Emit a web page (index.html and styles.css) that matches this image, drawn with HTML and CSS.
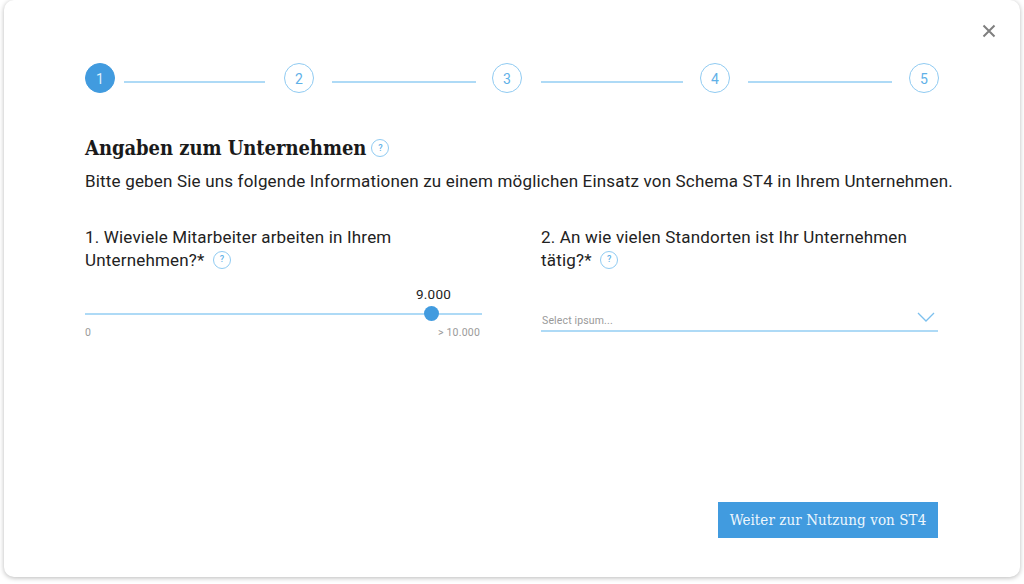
FILE: index.html
```html
<!DOCTYPE html>
<html lang="de">
<head>
<meta charset="utf-8">
<title>Angaben zum Unternehmen</title>
<link rel="stylesheet" href="styles.css">
</head>
<body>
<main class="card">
  <button class="close" aria-label="Schließen">
    <svg width="14" height="14" viewBox="0 0 14 14"><path d="M1.5 1.5 12.5 12.5M12.5 1.5 1.5 12.5" fill="none" stroke="#7f7f7f" stroke-width="2"/></svg>
  </button>
  <ol class="stepper">
    <li class="step step-active">1</li>
    <li class="line line-first"></li>
    <li class="step">2</li>
    <li class="line line-b"></li>
    <li class="step">3</li>
    <li class="line line-c"></li>
    <li class="step">4</li>
    <li class="line line-d"></li>
    <li class="step">5</li>
  </ol>
  <h1 class="title">Angaben zum Unternehmen <span class="help help-title">?</span></h1>
  <p class="intro">Bitte geben Sie uns folgende Informationen zu einem möglichen Einsatz von Schema ST4 in Ihrem Unternehmen.</p>
  <div class="columns">
    <section class="col col-left">
      <h2 class="question">1. Wieviele Mitarbeiter arbeiten in Ihrem Unternehmen?* <span class="help">?</span></h2>
      <div class="slider">
        <div class="slider-value">9.000</div>
        <div class="slider-track"><span class="slider-thumb"></span></div>
        <div class="slider-scale"><span>0</span><span>&gt; 10.000</span></div>
      </div>
    </section>
    <section class="col col-right">
      <h2 class="question">2. An wie vielen Standorten ist Ihr Unternehmen tätig?* <span class="help">?</span></h2>
      <div class="select">
        <span>Select ipsum...</span>
        <svg width="18" height="10" viewBox="0 0 18 10"><path d="M1 1 9 9 17 1" fill="none" stroke="#7cc0ee" stroke-width="1.3"/></svg>
      </div>
    </section>
  </div>
  <div class="actions">
    <button class="next">Weiter zur Nutzung von ST4</button>
  </div>
</main>
</body>
</html>
```
FILE: styles.css
```css
* { box-sizing: border-box; }
html, body { margin: 0; height: 100%; background: #fff; }
body { padding: 0 4px 7px; font-family: Roboto, "Liberation Sans", sans-serif; color: #222; overflow: hidden; }
.card {
  position: relative;
  height: 577px;
  padding: 63px 82px 0 81px;
  background: #fff;
  border-radius: 10px;
  box-shadow: 0 1px 5px rgba(0,0,0,.28);
  display: flex;
  flex-direction: column;
}
.close { position: absolute; top: 24px; right: 24px; width: 14px; height: 14px; padding: 0; border: 0; background: none; display: flex; }
.stepper { list-style: none; margin: 0; padding: 0; display: flex; align-items: center; width: 854px; }
.step {
  flex: none; width: 30px; height: 30px; border-radius: 50%;
  border: 1px solid #90cbf2; color: #5fb1e8; background: #fff;
  font-size: 14px; display: flex; align-items: center; justify-content: center; padding-top: 1px;
}
.step-active { background: #419bdf; border-color: #419bdf; color: #dff0fb; }
.line { flex: none; height: 2px; background: #aedaf6; margin-top: 7px; }
.line-first { width: 141px; margin-left: 9px; margin-right: 19px; }
.line-b { width: 144px; margin-left: 18px; margin-right: 16px; }
.line-c { width: 142px; margin-left: 19px; margin-right: 17px; }
.line-d { width: 144px; margin-left: 18px; margin-right: 17px; }
.title {
  margin: 41px 0 0; font: bold 20px/28px "DejaVu Serif Condensed", "DejaVu Serif", serif; letter-spacing: -.05px; color: #1a1a1a;
  display: flex; align-items: center; gap: 5px;
}
.help {
  display: inline-flex; width: 18px; height: 18px; border: 1px solid #90cbf2; border-radius: 50%;
  align-items: center; justify-content: center; vertical-align: 4px; margin-left: 4px;
  font: 500 9px/1 Roboto, sans-serif; color: #5fb1e8; letter-spacing: 0;
}
.help-title { margin-left: 0; }
.intro { margin: 7px 0 0; font-size: 17px; line-height: 24px; white-space: nowrap; letter-spacing: .18px; }
.columns { display: flex; margin-top: 33px; }
.col { flex: none; }
.col-left { width: 397px; margin-right: 59px; }
.col-right { width: 397px; }
.question { margin: 0; font-weight: 400; font-size: 17px; line-height: 23px; letter-spacing: .18px; }
.slider { margin-top: 14px; }
.slider-value { font-size: 13.5px; line-height: 16px; text-align: right; padding-right: 31px; letter-spacing: .2px; }
.slider-track { position: relative; height: 2px; margin-top: 11px; background: #aedaf6; }
.slider-thumb { position: absolute; left: 339px; top: -7px; width: 15px; height: 15px; border-radius: 50%; background: #419bdf; }
.slider-scale { display: flex; justify-content: space-between; padding-right: 2px; margin-top: 11px; font-size: 10.5px; line-height: 13px; color: #9a9a9a; letter-spacing: .2px; }
.select {
  margin-top: 31px; height: 29px; border-bottom: 2px solid #aedaf6;
  display: flex; justify-content: space-between; padding: 8px 3px 0 1px;
  font-size: 10.5px; line-height: 14px; color: #9a9a9a; letter-spacing: .15px;
}
.select span { padding-top: 3px; }
.select svg { margin-top: 1px; }
.actions { margin-top: auto; padding-bottom: 39px; display: flex; justify-content: flex-end; width: 853px; }
.next {
  width: 220px; height: 36px; padding: 0; border: 0; background: #419bdf; color: #eef7fd;
  font: 400 15px/36px "DejaVu Serif Condensed", "DejaVu Serif", serif; letter-spacing: .08px;
}
```
